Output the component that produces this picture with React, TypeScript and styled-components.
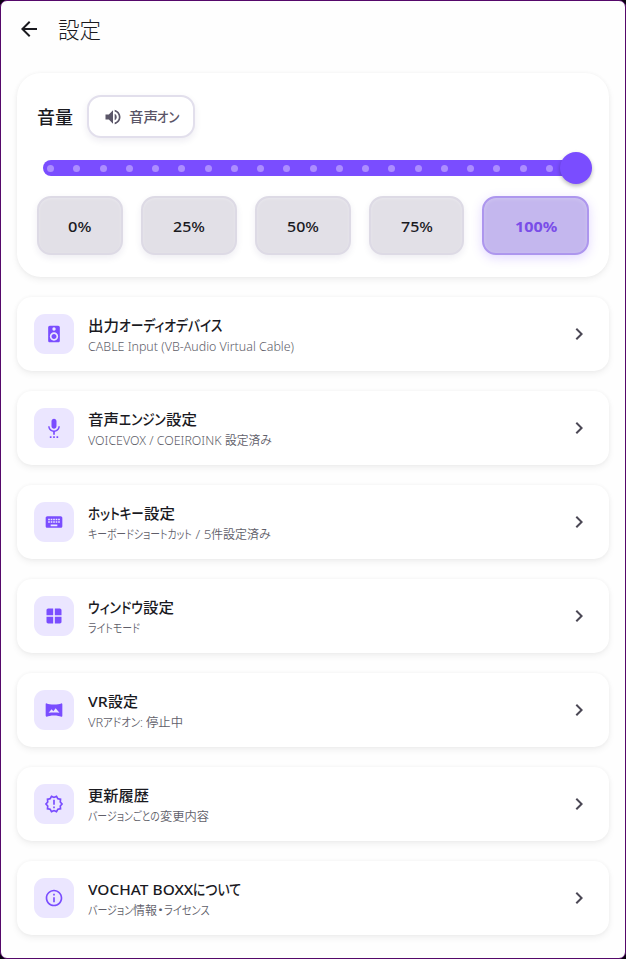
import React, { useLayoutEffect, useRef, useState } from "react";
import styled, { createGlobalStyle, css } from "styled-components";
import type { IconType } from "react-icons";
import {
  MdArrowBack,
  MdChevronRight,
  MdInfoOutline,
  MdKeyboard,
  MdOutlineNewReleases,
  MdSettingsVoice,
  MdSpeaker,
  MdVolumeUp,
  MdVrpano,
  MdWindow,
} from "react-icons/md";

const GlobalStyle = createGlobalStyle`
  * { box-sizing: border-box; }
  body {
    margin: 0;
    background: #0a0410;
    font-family: "Noto Sans", "Noto Sans CJK JP", sans-serif;
    color: #1a1a1f;
  }
  button { font: inherit; color: inherit; }
`;

const Window = styled.div`
  display: flex;
  flex-direction: column;
  height: 959px;
  border: 1px solid #55086a;
  border-radius: 7px;
  background: #fefefe;
  overflow: hidden;
`;

const Header = styled.header`
  display: flex;
  align-items: center;
  gap: 17px;
  height: 56px;
  padding: 0 16px;
`;

const BackButton = styled.button`
  display: flex;
  padding: 0;
  border: 0;
  background: none;
`;

const PageTitle = styled.h1`
  display: flex;
  margin: 0;
  font-size: 22px;
  font-weight: 300;
  line-height: 30px;
`;

const Content = styled.main`
  display: flex;
  flex-direction: column;
  gap: 20px;
  padding: 16px 16px 0;
`;

const cardSurface = css`
  background: #fff;
  box-shadow: 0 0 4px rgba(0, 0, 0, 0.04), 0 3px 7px rgba(0, 0, 0, 0.06);
`;

const VolumeCard = styled.section`
  ${cardSurface}
  display: flex;
  flex-direction: column;
  height: 204px;
  padding: 22px 20px 0;
  border-radius: 24px;
`;

const VolumeHeader = styled.div`
  display: flex;
  align-items: center;
  gap: 14px;
`;

const VolumeTitle = styled.h2`
  display: flex;
  margin: 0;
  font-size: 18px;
  font-weight: 500;
  line-height: 26px;
`;

const MuteButton = styled.button`
  display: flex;
  align-items: center;
  gap: 5px;
  width: 108px;
  height: 43px;
  padding: 0 0 0 14px;
  border: 2px solid #e2dfec;
  border-radius: 14px;
  background: #fff;
  box-shadow: 0 3px 7px rgba(40, 30, 90, 0.08);
  color: #5b5668;
  font-size: 14px;
  font-weight: 500;
  line-height: 20px;
`;

const StateLabel = styled.span`
  display: flex;
`;

const Slider = styled.div`
  display: flex;
  align-items: center;
  height: 32px;
  margin: 14px -3px 0 6px;
`;

const Track = styled.div`
  display: flex;
  flex: 1;
  align-items: center;
  justify-content: space-between;
  height: 16px;
  margin-right: -16px;
  padding: 0 23px 0 4px;
  border-radius: 8px;
  background: #7a4dff;
`;

const Tick = styled.span`
  width: 7px;
  height: 7px;
  border-radius: 50%;
  background: #ac8dff;
`;

const Thumb = styled.span`
  flex: none;
  width: 32px;
  height: 32px;
  border-radius: 50%;
  background: #7a4dff;
  box-shadow: 0 2px 4px rgba(0, 0, 0, 0.28);
`;

const Presets = styled.div`
  display: flex;
  gap: 18px;
  margin-top: 12px;
`;

const Preset = styled.button<{ $width: number; $active?: boolean }>`
  display: flex;
  flex: none;
  align-items: center;
  justify-content: center;
  width: ${(p) => p.$width}px;
  height: 59px;
  padding: 0 2px 0 0;
  border-radius: 14px;
  font-size: 15px;
  line-height: 20px;
  ${(p) =>
    p.$active
      ? css`
          border: 2px solid #ad96ee;
          background: #c4b7ee;
          box-shadow: 0 3px 11px rgba(122, 77, 255, 0.22), inset 0 1px 4px rgba(255, 255, 255, 0.2);
          color: #7a4de8;
          font-weight: 700;
        `
      : css`
          border: 2px solid #dddae5;
          background: #e2e0e7;
          box-shadow: 0 3px 7px rgba(40, 30, 90, 0.08), inset 0 1px 3px rgba(255, 255, 255, 0.25);
          font-weight: 500;
        `}
`;

const Row = styled.section`
  ${cardSurface}
  display: flex;
  align-items: center;
  height: 74px;
  padding: 0 18px 0 17px;
  border-radius: 15px;
`;

const IconTile = styled.div`
  display: flex;
  align-items: center;
  justify-content: center;
  width: 40px;
  height: 40px;
  margin-right: 14px;
  border-radius: 11px;
  background: #ebe6ff;
  color: #7a4dff;
`;

const RowText = styled.div`
  display: flex;
  flex: 1;
  flex-direction: column;
  padding-top: 4px;
`;

const RowTitle = styled.div`
  display: flex;
  font-size: 15px;
  font-weight: 500;
  line-height: 21px;
`;

const RowDetail = styled.div`
  display: flex;
  color: #605e69;
  font-size: 12px;
  font-weight: 350;
  line-height: 21px;
`;

const Chevron = styled(MdChevronRight)`
  color: #4b4855;
`;

const RunBox = styled.span`
  display: block;
  white-space: pre;
`;

const RunText = styled.span`
  display: inline-block;
  transform-origin: 0 50%;
  font-feature-settings: "palt";
`;

type Run = [text: string, width: number];

function FittedRun({ text, width }: { text: string; width: number }) {
  const ref = useRef<HTMLSpanElement>(null);
  const [scale, setScale] = useState(1);
  useLayoutEffect(() => {
    if (ref.current) setScale(width / ref.current.offsetWidth);
  }, [text, width]);
  return (
    <RunBox style={{ width }}>
      <RunText ref={ref} style={{ transform: `scaleX(${scale})` }}>
        {text}
      </RunText>
    </RunBox>
  );
}

function Runs({ items }: { items: Run[] }) {
  return (
    <>
      {items.map(([text, width]) => (
        <FittedRun key={text} text={text} width={width} />
      ))}
    </>
  );
}

const rows: { icon: IconType; title: Run[]; detail: Run[] }[] = [
  {
    icon: MdSpeaker,
    title: [["出力", 31], ["オーディオデバイス", 103]],
    detail: [["CABLE Input (VB-Audio Virtual Cable)", 206]],
  },
  {
    icon: MdSettingsVoice,
    title: [["音声", 31], ["エンジン", 47], ["設定", 31]],
    detail: [["VOICEVOX / COEIROINK ", 137], ["設定済み", 47]],
  },
  {
    icon: MdKeyboard,
    title: [["ホットキー", 56], ["設定", 31]],
    detail: [["キーボードショートカット", 104], [" / 5", 19], ["件設定済", 48], ["み", 12]],
  },
  {
    icon: MdWindow,
    title: [["ウィンドウ", 55], ["設定", 31]],
    detail: [["ライトモード", 52]],
  },
  {
    icon: MdVrpano,
    title: [["VR", 20], ["設定", 30]],
    detail: [["VR", 15], ["アドオン", 37], [": ", 6], ["停止中", 37]],
  },
  {
    icon: MdOutlineNewReleases,
    title: [["更新履歴", 61]],
    detail: [["バージョンごとの", 72], ["変更内容", 49]],
  },
  {
    icon: MdInfoOutline,
    title: [["VOCHAT BOXX", 105], ["について", 48]],
    detail: [["バージョン", 45], ["情報", 24], ["・", 7], ["ライセンス", 46]],
  },
];

const presets = [
  { label: "0%", width: 86, labelWidth: 23 },
  { label: "25%", width: 96, labelWidth: 32 },
  { label: "50%", width: 96, labelWidth: 32 },
  { label: "75%", width: 95, labelWidth: 32 },
  { label: "100%", width: 107, labelWidth: 42, active: true },
];

export default function App() {
  return (
    <>
      <GlobalStyle />
      <Window>
        <Header>
          <BackButton aria-label="戻る">
            <MdArrowBack size={24} />
          </BackButton>
          <PageTitle>
            <Runs items={[["設定", 43]]} />
          </PageTitle>
        </Header>
        <Content>
          <VolumeCard>
            <VolumeHeader>
              <VolumeTitle>
                <Runs items={[["音量", 36]]} />
              </VolumeTitle>
              <MuteButton>
                <MdVolumeUp size={20} />
                <StateLabel>
                  <Runs items={[["音声", 29], ["オン", 22]]} />
                </StateLabel>
              </MuteButton>
            </VolumeHeader>
            <Slider>
              <Track>
                {Array.from({ length: 20 }, (_, i) => (
                  <Tick key={i} />
                ))}
              </Track>
              <Thumb />
            </Slider>
            <Presets>
              {presets.map((p) => (
                <Preset key={p.label} $width={p.width} $active={p.active}>
                  <FittedRun text={p.label} width={p.labelWidth} />
                </Preset>
              ))}
            </Presets>
          </VolumeCard>
          {rows.map(({ icon: Icon, title, detail }) => (
            <Row key={title[0][0] + detail[0][0]}>
              <IconTile>
                <Icon size={20} />
              </IconTile>
              <RowText>
                <RowTitle>
                  <Runs items={title} />
                </RowTitle>
                <RowDetail>
                  <Runs items={detail} />
                </RowDetail>
              </RowText>
              <Chevron size={24} />
            </Row>
          ))}
        </Content>
      </Window>
    </>
  );
}
